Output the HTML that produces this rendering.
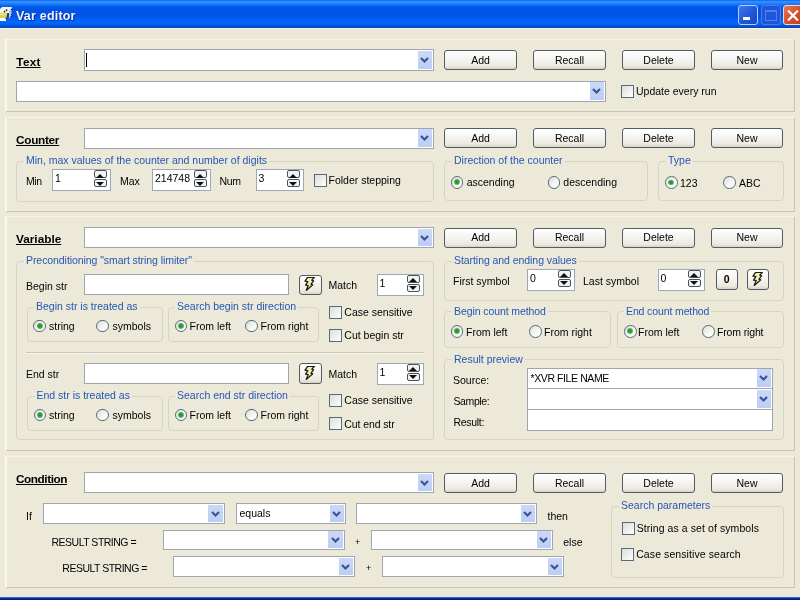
<!DOCTYPE html>
<html>
<head>
<meta charset="utf-8">
<title>Var editor</title>
<style>
html,body{margin:0;padding:0;}
body{width:800px;height:600px;overflow:hidden;position:relative;background:#ece9d8;font-family:"Liberation Sans",sans-serif;font-size:10.5px;color:#000;}
*{box-sizing:border-box;}
.a{position:absolute;}
.tb{left:0;top:0;width:800px;height:27.600px;background:linear-gradient(#0f60ec 0,#2f8dff 5%,#2a8aff 10%,#157cfc 15%,#0566f0 21%,#0058e6 27%,#0054e3 34%,#0055e8 56%,#005bf5 66%,#0468fe 78%,#0362f2 86%,#0356dc 92%,#0748c4 97%,#0a40b4 100%);box-shadow:0 1px 0 #f2f4f0;}
.tt{left:16px;top:8.5px;color:#eef4ff;font-weight:bold;font-size:12.5px;line-height:15px;letter-spacing:0.2px;text-shadow:1px 1px 1px #0a2a90;white-space:nowrap;}
.wb{top:5px;width:20px;height:20px;border:1px solid #b4cffa;border-radius:3px;background:linear-gradient(135deg,#3f7af0,#2358dc 50%,#1a46c4);}
.wc{border-color:#f4d8d0;background:linear-gradient(135deg,#e8785a,#d8502c 50%,#c43c18);}
.bot{left:0;top:595.700px;width:800px;height:4.300px;background:linear-gradient(#e6ecf6 0,#d4e0fa 1px,#2a4cb0 1.600px,#0a2090 2.600px,#081888 4.300px);}
.p{border:1px solid;border-width:1.500px 1.500px 1.700px 2px;border-color:#f8f6ea #c8c5b2 #c6c3b0 #f9f8ee;}
.h{font-weight:bold;font-size:11.8px;text-decoration:underline;line-height:15px;white-space:nowrap;}
.l{line-height:13px;white-space:nowrap;}
.bl{color:#2456b6;margin-top:.5px;background:#ece9d8;padding:0 2px;line-height:13px;white-space:nowrap;}
.g{border:1px solid #d5d3c1;border-radius:4px;}
.i{background:#fff;border:1px solid #9fa6b0;}
.c{background:#fff;border:1px solid #9fa6b0;}
.c:after{content:"";position:absolute;right:.6px;top:.7px;bottom:.6px;width:14.500px;background:linear-gradient(#cbd8f8,#bccdf5);}
.c svg{position:absolute;right:4px;top:50%;margin-top:-3px;z-index:2;}
.b{border:1px solid #525c68;border-radius:3px;background:linear-gradient(#fff,#f4f3ee 50%,#ebe9df 85%,#d8d2c0);text-align:center;line-height:17.500px;}
.k{width:13px;height:13px;border:1px solid #566a80;background:linear-gradient(135deg,#dcdcd7,#fff);}
.r{width:12.600px;height:12.600px;margin:-.5px 0 0 -.7px;border:1px solid #586a80;border-radius:50%;background:linear-gradient(135deg,#deded6 0,#f6f6f2 55%,#fff);}
.r.on:after{content:"";position:absolute;left:2.400px;top:2.400px;width:5.800px;height:5.800px;border-radius:50%;background:radial-gradient(circle at 48% 48%,#288c30 0,#34a03c 40%,#78c47c 72%,rgba(200,235,200,.3) 100%);}
.s{background:#fff;border:1px solid #9aa8b8;line-height:16.500px;padding-left:2px;}
.sp{position:absolute;right:3px;width:13.500px;height:8px;border:1px solid #4a5258;border-radius:2px;background:#f0f3f5;}
.sp.u{top:.4px;}
.sp.d{top:9.400px;}
.sp.u:after{content:"";position:absolute;left:1.750px;top:-1.700px;border:4px solid transparent;border-bottom:4px solid #111;}
.sp.d:after{content:"";position:absolute;left:1.750px;top:1.600px;border:4px solid transparent;border-top:4px solid #111;}
.hr{height:2px;border-top:1px solid #cbc8b6;border-bottom:1px solid #f6f5ec;}
</style>
</head>
<body>
<div id="w" style="position:absolute;left:0;top:0;width:800px;height:600px;will-change:transform;opacity:.999">
<!-- title bar -->
<div class="a tb"></div>
<svg class="a" style="left:0;top:5px" width="13" height="18" viewBox="0 5 13 18"><path d="M2 7h10l-2 6H0v-4z" fill="#f4f2ea"/><path d="M0 13h7v5H0z" fill="#d8d24a"/><path d="M0 14.500h6" stroke="#f0eea0" stroke-width="1"/><path d="M0 18h6v3H0z" fill="#fafafa"/><path d="M4 12l4-3M6 19l5-9" stroke="#2a2a30" stroke-width="1.600" stroke-dasharray="1.500 1" fill="none"/><path d="M9 12l3-4v6l-3 5z" fill="#e8e8f0" opacity=".8"/><path d="M11.500 9v8" stroke="#1a1a24" stroke-width="1.200" stroke-dasharray="1.200 1.200"/></svg>
<div class="a tt">Var editor</div>
<div class="a wb" style="left:738px"><div class="a" style="left:4px;top:11px;width:7px;height:3px;background:#fff"></div></div>
<div class="a wb" style="left:761px;border-color:#4a7cec;background:#1f55dc"><div class="a" style="left:3px;top:4px;width:12px;height:11px;border:1px solid #4f80ee;border-top-width:2px"></div></div>
<div class="a wb wc" style="left:783px"><svg class="a" style="left:3px;top:4px" width="12" height="11" viewBox="0 0 12 11"><path d="M1 0.500l10 10M11 0.500l-10 10" stroke="#fff" stroke-width="2.200"/></svg></div>
<div class="a bot"></div>

<!-- PANEL 1 : Text -->
<div class="a p" style="left:5px;top:39px;width:789.500px;height:73px"></div>
<div class="a h" style="left:16.300px;top:54.600px;letter-spacing:.25px">Text</div>
<div class="a c" style="left:84px;top:49px;width:350px;height:21.500px"><svg width="9" height="7" viewBox="0 0 9 7"><path d="M1 1l3.500 3.500L8 1" fill="none" stroke="#3a5590" stroke-width="2.2"/></svg></div>
<div class="a" style="left:86px;top:53px;width:1px;height:14px;background:#000"></div>
<div class="a b" style="left:444px;top:50px;width:73px;height:19.500px;line-height:19.500px">Add</div>
<div class="a b" style="left:533px;top:50px;width:73px;height:19.500px;line-height:19.500px">Recall</div>
<div class="a b" style="left:622px;top:50px;width:73px;height:19.500px;line-height:19.500px">Delete</div>
<div class="a b" style="left:711px;top:50px;width:72px;height:19.500px;line-height:19.500px">New</div>
<div class="a c" style="left:16px;top:80.500px;width:590px;height:21px"><svg width="9" height="7" viewBox="0 0 9 7"><path d="M1 1l3.500 3.500L8 1" fill="none" stroke="#3a5590" stroke-width="2.2"/></svg></div>
<div class="a k" style="left:621px;top:85px"></div>
<div class="a l" style="left:636px;top:85px">Update every run</div>

<!-- PANEL 2 : Counter -->
<div class="a p" style="left:5px;top:116.500px;width:789.500px;height:95.300px"></div>
<div class="a h" style="left:16px;top:132.700px;letter-spacing:-0.3px">Counter</div>
<div class="a c" style="left:84px;top:127.500px;width:350px;height:21px"><svg width="9" height="7" viewBox="0 0 9 7"><path d="M1 1l3.500 3.500L8 1" fill="none" stroke="#3a5590" stroke-width="2.2"/></svg></div>
<div class="a b" style="left:444px;top:128px;width:73px;height:20px;line-height:19px">Add</div>
<div class="a b" style="left:533px;top:128px;width:73px;height:20px;line-height:19px">Recall</div>
<div class="a b" style="left:622px;top:128px;width:73px;height:20px;line-height:19px">Delete</div>
<div class="a b" style="left:711px;top:128px;width:72px;height:20px;line-height:19px">New</div>
<div class="a g" style="left:16px;top:160.500px;width:418px;height:41.500px"></div>
<div class="a bl" style="left:24px;top:153px">Min, max values of the counter and number of digits</div>
<div class="a l" style="left:26px;top:175px;letter-spacing:-.4px">Min</div>
<div class="a s" style="left:52px;top:169px;width:59px;height:22px">1<i class="sp u"></i><i class="sp d"></i></div>
<div class="a l" style="left:120px;top:175px">Max</div>
<div class="a s" style="left:152px;top:169px;width:59px;height:22px">214748<i class="sp u"></i><i class="sp d"></i></div>
<div class="a l" style="left:219.500px;top:175px;letter-spacing:-0.3px">Num</div>
<div class="a s" style="left:255.500px;top:169px;width:48.500px;height:22px">3<i class="sp u"></i><i class="sp d"></i></div>
<div class="a k" style="left:314px;top:174px"></div>
<div class="a l" style="left:328.500px;top:173.500px">Folder stepping</div>
<div class="a g" style="left:444px;top:161px;width:204px;height:40px"></div>
<div class="a bl" style="left:452px;top:153.500px">Direction of the counter</div>
<div class="a r on" style="left:451.300px;top:176.500px"></div>
<div class="a l" style="left:466.700px;top:176px">ascending</div>
<div class="a r" style="left:548.500px;top:176.500px"></div>
<div class="a l" style="left:563.300px;top:176px">descending</div>
<div class="a g" style="left:658px;top:161px;width:125.500px;height:40px"></div>
<div class="a bl" style="left:666px;top:153.500px">Type</div>
<div class="a r on" style="left:665.700px;top:176.700px"></div>
<div class="a l" style="left:680px;top:176.500px">123</div>
<div class="a r" style="left:724px;top:176.700px"></div>
<div class="a l" style="left:739px;top:176.500px">ABC</div>

<!-- PANEL 3 : Variable -->
<div class="a p" style="left:5px;top:216px;width:789.500px;height:235px"></div>
<div class="a h" style="left:16px;top:231.700px">Variable</div>
<div class="a c" style="left:84px;top:227px;width:350px;height:21px"><svg width="9" height="7" viewBox="0 0 9 7"><path d="M1 1l3.500 3.500L8 1" fill="none" stroke="#3a5590" stroke-width="2.2"/></svg></div>
<div class="a b" style="left:444px;top:228px;width:73px;height:19.500px">Add</div>
<div class="a b" style="left:533px;top:228px;width:73px;height:19.500px">Recall</div>
<div class="a b" style="left:622px;top:228px;width:73px;height:19.500px">Delete</div>
<div class="a b" style="left:711px;top:228px;width:72px;height:19.500px">New</div>

<div class="a g" style="left:16px;top:260.500px;width:417.500px;height:179.500px"></div>
<div class="a bl" style="left:24px;top:253px;letter-spacing:-.07px">Preconditioning "smart string limiter"</div>
<div class="a l" style="left:26px;top:279.700px">Begin str</div>
<div class="a i" style="left:84px;top:273.500px;width:204.500px;height:21px"></div>
<div class="a b" style="left:299px;top:274.600px;width:22.700px;height:20.500px"><svg class="a" style="left:4px;top:1.700px" width="12" height="14" viewBox="0 0 12 14"><path d="M3.600 .4L10.400 .3 7.800 3.200 9.600 3.800 7 7.200 8.800 7.800 2.200 13.400 4.200 8.600 1.600 8.200 3.800 4.600 1 4.200z" fill="#eef0b4" stroke="#1c1c10" stroke-width="1.250" stroke-linejoin="round"/></svg></div>
<div class="a l" style="left:328.500px;top:279px">Match</div>
<div class="a s" style="left:376.500px;top:273.500px;width:47.500px;height:22px">1<i class="sp u"></i><i class="sp d"></i></div>
<div class="a g" style="left:26.500px;top:306.500px;width:136px;height:35px"></div>
<div class="a bl" style="left:34px;top:299.400px">Begin str is treated as</div>
<div class="a r on" style="left:34px;top:320px"></div>
<div class="a l" style="left:49px;top:319.600px">string</div>
<div class="a r" style="left:97px;top:320px"></div>
<div class="a l" style="left:112.500px;top:319.600px">symbols</div>
<div class="a g" style="left:168px;top:306.500px;width:151px;height:35px"></div>
<div class="a bl" style="left:175px;top:299.400px">Search begin str direction</div>
<div class="a r on" style="left:175.500px;top:320px"></div>
<div class="a l" style="left:189.600px;top:319.600px">From left</div>
<div class="a r" style="left:246px;top:320px"></div>
<div class="a l" style="left:260.500px;top:319.600px">From right</div>
<div class="a k" style="left:329px;top:305.500px"></div>
<div class="a l" style="left:344.300px;top:306px">Case sensitive</div>
<div class="a k" style="left:329px;top:328.500px"></div>
<div class="a l" style="left:344.300px;top:328.800px">Cut begin str</div>
<div class="a hr" style="left:26px;top:352px;width:398px"></div>

<div class="a l" style="left:26px;top:368px">End str</div>
<div class="a i" style="left:84px;top:363px;width:204.500px;height:20.500px"></div>
<div class="a b" style="left:299px;top:363.300px;width:22.700px;height:20.500px"><svg class="a" style="left:4px;top:1.700px" width="12" height="14" viewBox="0 0 12 14"><path d="M3.600 .4L10.400 .3 7.800 3.200 9.600 3.800 7 7.200 8.800 7.800 2.200 13.400 4.200 8.600 1.600 8.200 3.800 4.600 1 4.200z" fill="#eef0b4" stroke="#1c1c10" stroke-width="1.250" stroke-linejoin="round"/></svg></div>
<div class="a l" style="left:328.500px;top:368px">Match</div>
<div class="a s" style="left:376.500px;top:362.500px;width:47.500px;height:22px">1<i class="sp u"></i><i class="sp d"></i></div>
<div class="a g" style="left:27px;top:396px;width:136px;height:35px"></div>
<div class="a bl" style="left:34.500px;top:388.500px">End str is treated as</div>
<div class="a r on" style="left:34.500px;top:409px"></div>
<div class="a l" style="left:49px;top:408.600px">string</div>
<div class="a r" style="left:97px;top:409px"></div>
<div class="a l" style="left:112.500px;top:408.600px">symbols</div>
<div class="a g" style="left:168px;top:396px;width:151px;height:35px"></div>
<div class="a bl" style="left:175px;top:388.500px">Search end str direction</div>
<div class="a r on" style="left:175.500px;top:409px"></div>
<div class="a l" style="left:189.600px;top:408.600px">From left</div>
<div class="a r" style="left:246px;top:409px"></div>
<div class="a l" style="left:260.500px;top:408.600px">From right</div>
<div class="a k" style="left:329px;top:394px"></div>
<div class="a l" style="left:344.300px;top:394px">Case sensitive</div>
<div class="a k" style="left:329px;top:416.500px"></div>
<div class="a l" style="left:344.300px;top:417.700px;letter-spacing:-.1px">Cut end str</div>

<div class="a g" style="left:444px;top:260.500px;width:340px;height:40px"></div>
<div class="a bl" style="left:452px;top:253px;letter-spacing:-.06px">Starting and ending values</div>
<div class="a l" style="left:453px;top:275px">First symbol</div>
<div class="a s" style="left:527px;top:268.500px;width:48px;height:22px">0<i class="sp u"></i><i class="sp d"></i></div>
<div class="a l" style="left:583px;top:275px">Last symbol</div>
<div class="a s" style="left:657.500px;top:268.500px;width:47.500px;height:22px">0<i class="sp u"></i><i class="sp d"></i></div>
<div class="a b" style="left:715.500px;top:269px;width:22.500px;height:21px;line-height:19px;font-weight:bold">0</div>
<div class="a b" style="left:746.750px;top:269px;width:22.500px;height:21px"><svg class="a" style="left:4px;top:1.700px" width="12" height="14" viewBox="0 0 12 14"><path d="M3.600 .4L10.400 .3 7.800 3.200 9.600 3.800 7 7.200 8.800 7.800 2.200 13.400 4.200 8.600 1.600 8.200 3.800 4.600 1 4.200z" fill="#eef0b4" stroke="#1c1c10" stroke-width="1.250" stroke-linejoin="round"/></svg></div>

<div class="a g" style="left:444px;top:311px;width:167px;height:37px"></div>
<div class="a bl" style="left:452px;top:304px;letter-spacing:-.09px">Begin count method</div>
<div class="a r on" style="left:451.500px;top:325.500px"></div>
<div class="a l" style="left:466px;top:325.500px">From left</div>
<div class="a r" style="left:530px;top:325.500px"></div>
<div class="a l" style="left:544px;top:325.500px">From right</div>
<div class="a g" style="left:616.500px;top:311px;width:167.500px;height:37px"></div>
<div class="a bl" style="left:624px;top:304px;letter-spacing:-.12px">End count method</div>
<div class="a r on" style="left:624.700px;top:325.500px"></div>
<div class="a l" style="left:638px;top:325.500px">From left</div>
<div class="a r" style="left:703px;top:325.500px"></div>
<div class="a l" style="left:717px;top:325.500px;letter-spacing:-.15px">From right</div>

<div class="a g" style="left:444px;top:359px;width:340px;height:81px"></div>
<div class="a bl" style="left:452px;top:352px">Result preview</div>
<div class="a l" style="left:453px;top:374px">Source:</div>
<div class="a c" style="left:527px;top:367.500px;width:246px;height:21px"><span class="a l" style="left:2.500px;top:3px;letter-spacing:-0.4px">*XVR FILE NAME</span><svg width="9" height="7" viewBox="0 0 9 7"><path d="M1 1l3.500 3.500L8 1" fill="none" stroke="#3a5590" stroke-width="2.2"/></svg></div>
<div class="a l" style="left:453.500px;top:395px;letter-spacing:-.4px">Sample:</div>
<div class="a c" style="left:527px;top:388px;width:246px;height:21.500px"><svg width="9" height="7" viewBox="0 0 9 7"><path d="M1 1l3.500 3.500L8 1" fill="none" stroke="#3a5590" stroke-width="2.2"/></svg></div>
<div class="a l" style="left:453.500px;top:416px;letter-spacing:-.3px">Result:</div>
<div class="a i" style="left:527px;top:409px;width:246px;height:21.500px"></div>

<!-- PANEL 4 : Condition -->
<div class="a p" style="left:5px;top:456px;width:789.500px;height:131.500px"></div>
<div class="a h" style="left:16px;top:471.800px;letter-spacing:-0.45px">Condition</div>
<div class="a c" style="left:84px;top:472px;width:350px;height:21px"><svg width="9" height="7" viewBox="0 0 9 7"><path d="M1 1l3.500 3.500L8 1" fill="none" stroke="#3a5590" stroke-width="2.2"/></svg></div>
<div class="a b" style="left:444px;top:473px;width:73px;height:20px;line-height:18.500px">Add</div>
<div class="a b" style="left:533px;top:473px;width:73px;height:20px;line-height:18.500px">Recall</div>
<div class="a b" style="left:622px;top:473px;width:73px;height:20px;line-height:18.500px">Delete</div>
<div class="a b" style="left:711px;top:473px;width:72px;height:20px;line-height:18.500px">New</div>
<div class="a l" style="left:26px;top:509.500px">If</div>
<div class="a c" style="left:42.500px;top:503px;width:182px;height:21px"><svg width="9" height="7" viewBox="0 0 9 7"><path d="M1 1l3.500 3.500L8 1" fill="none" stroke="#3a5590" stroke-width="2.2"/></svg></div>
<div class="a c" style="left:235.500px;top:503px;width:110.500px;height:21px"><span class="a l" style="left:3px;top:3px">equals</span><svg width="9" height="7" viewBox="0 0 9 7"><path d="M1 1l3.500 3.500L8 1" fill="none" stroke="#3a5590" stroke-width="2.2"/></svg></div>
<div class="a c" style="left:355.500px;top:503px;width:181.500px;height:21px"><svg width="9" height="7" viewBox="0 0 9 7"><path d="M1 1l3.500 3.500L8 1" fill="none" stroke="#3a5590" stroke-width="2.2"/></svg></div>
<div class="a l" style="left:547.500px;top:509.500px">then</div>
<div class="a l" style="left:51.500px;top:535.700px;letter-spacing:-0.5px">RESULT STRING =</div>
<div class="a c" style="left:163px;top:529.500px;width:181.500px;height:20.500px"><svg width="9" height="7" viewBox="0 0 9 7"><path d="M1 1l3.500 3.500L8 1" fill="none" stroke="#3a5590" stroke-width="2.2"/></svg></div>
<div class="a l" style="left:355px;top:536px;font-size:9px">+</div>
<div class="a c" style="left:371.250px;top:529.500px;width:181.500px;height:20.500px"><svg width="9" height="7" viewBox="0 0 9 7"><path d="M1 1l3.500 3.500L8 1" fill="none" stroke="#3a5590" stroke-width="2.2"/></svg></div>
<div class="a l" style="left:563.250px;top:535.700px">else</div>
<div class="a l" style="left:62.300px;top:562px;letter-spacing:-0.5px">RESULT STRING =</div>
<div class="a c" style="left:172.500px;top:556px;width:182.500px;height:21px"><svg width="9" height="7" viewBox="0 0 9 7"><path d="M1 1l3.500 3.500L8 1" fill="none" stroke="#3a5590" stroke-width="2.2"/></svg></div>
<div class="a l" style="left:366px;top:562px;font-size:9px">+</div>
<div class="a c" style="left:382px;top:556px;width:182px;height:21px"><svg width="9" height="7" viewBox="0 0 9 7"><path d="M1 1l3.500 3.500L8 1" fill="none" stroke="#3a5590" stroke-width="2.2"/></svg></div>
<div class="a g" style="left:611px;top:505.500px;width:173px;height:72.500px"></div>
<div class="a bl" style="left:619px;top:498px">Search parameters</div>
<div class="a k" style="left:621.500px;top:521.500px"></div>
<div class="a l" style="left:636.700px;top:522.300px;letter-spacing:.08px">String as a set of symbols</div>
<div class="a k" style="left:621.200px;top:547.600px"></div>
<div class="a l" style="left:636.200px;top:548.400px;letter-spacing:.09px">Case sensitive search</div>
</div>
</body>
</html>
